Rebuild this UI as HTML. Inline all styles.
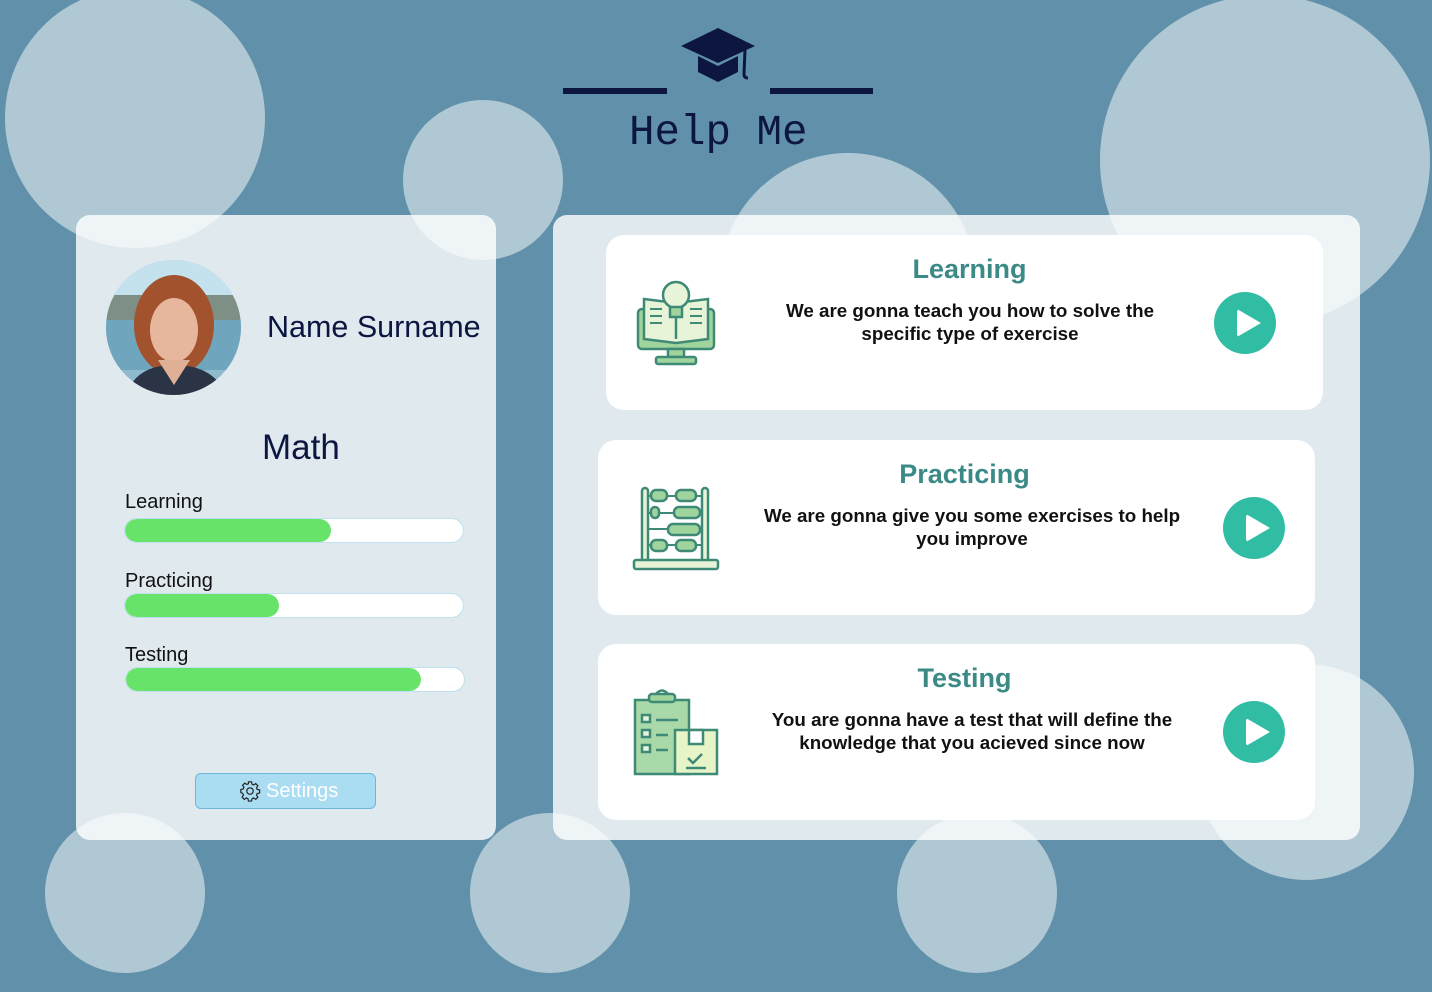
<!DOCTYPE html>
<html><head><meta charset="utf-8"><style>
*{margin:0;padding:0;box-sizing:border-box}
body{width:1432px;height:992px;background:#6191aa;position:relative;overflow:hidden;font-family:"Liberation Sans",Arial,sans-serif}
.c{position:absolute;border-radius:50%;background:#b0c8d4}
.panel{position:absolute;background:rgba(255,255,255,0.8);border-radius:14px}
.card{position:absolute;background:#fff;border-radius:18px}
.card h2{position:absolute;left:0;right:0;text-align:center;color:#3b8a86;font-size:27px;font-weight:bold}
.card p{position:absolute;text-align:center;font-weight:bold;font-size:18.8px;line-height:23px;color:#111}
.play{position:absolute;width:62px;height:62px;border-radius:50%;background:#31bda4}
.play:after{content:"";position:absolute;left:23px;top:17px;border-left:24px solid #fff;border-top:14px solid transparent;border-bottom:14px solid transparent;border-radius:3px}
.lbl{position:absolute;left:125px;font-size:20px;color:#111}
.bar{position:absolute;left:124px;width:340px;height:25px;border-radius:13px;background:#fff;border:1px solid #bfe0ef;overflow:hidden}
.bar div{height:100%;background:#68e36a;border-radius:13px}
</style></head><body>
<div class="c" style="left:5px;top:-12px;width:260px;height:260px"></div>
<div class="c" style="left:403px;top:100px;width:160px;height:160px"></div>
<div class="c" style="left:720px;top:153px;width:256px;height:256px"></div>
<div class="c" style="left:1100px;top:-5px;width:330px;height:330px"></div>
<div class="c" style="left:1198px;top:664px;width:216px;height:216px"></div>
<div class="c" style="left:45px;top:813px;width:160px;height:160px"></div>
<div class="c" style="left:470px;top:813px;width:160px;height:160px"></div>
<div class="c" style="left:897px;top:813px;width:160px;height:160px"></div>

<div style="position:absolute;left:563px;top:88px;width:104px;height:6px;background:#0c1640"></div>
<div style="position:absolute;left:770px;top:88px;width:103px;height:6px;background:#0c1640"></div>
<svg style="position:absolute;left:678px;top:26px" width="80" height="60" viewBox="0 0 80 60">
<polygon points="40,2 77,20 40,37 3,20" fill="#0c1640"/>
<path d="M20,30 L20,46 L40,56 L60,46 L60,30 L40,40 Z" fill="#0c1640"/>
<path d="M67,24 L66,48 Q66,52 70,52" stroke="#0c1640" stroke-width="3" fill="none"/>
</svg>
<div style="position:absolute;left:629px;top:109px;font-family:'Liberation Mono',monospace;font-size:42.5px;color:#0c1640">Help Me</div>

<div class="panel" style="left:76px;top:215px;width:420px;height:625px"></div>
<svg style="position:absolute;left:106px;top:260px" width="135" height="135" viewBox="0 0 135 135">
<defs><clipPath id="cp"><circle cx="67.5" cy="67.5" r="67.5"/></clipPath></defs>
<g clip-path="url(#cp)">
<rect width="135" height="135" fill="#8fb9cc"/>
<rect y="0" width="135" height="40" fill="#c4e2ee"/>
<rect y="35" width="135" height="25" fill="#7e8f86"/>
<rect y="60" width="135" height="50" fill="#6fa5bd"/>
<ellipse cx="68" cy="65" rx="40" ry="50" fill="#a2522c"/>
<ellipse cx="68" cy="70" rx="24" ry="32" fill="#e6b79d"/>
<path d="M20,135 Q30,105 68,105 Q108,105 120,135 Z" fill="#2a3445"/>
<path d="M52,100 L68,125 L84,100 Z" fill="#e0b096"/>
</g></svg>
<div style="position:absolute;left:267px;top:310px;font-size:30.5px;color:#0c1640">Name Surname</div>
<div style="position:absolute;left:262px;top:428px;font-size:35px;color:#0c1640">Math</div>
<div class="lbl" style="top:491px">Learning</div>
<div class="bar" style="top:518px"><div style="width:206px"></div></div>
<div class="lbl" style="top:570px">Practicing</div>
<div class="bar" style="top:593px"><div style="width:154px"></div></div>
<div class="lbl" style="top:644px">Testing</div>
<div class="bar" style="top:667px;left:125px"><div style="width:295px"></div></div>
<div style="position:absolute;left:195px;top:773px;width:181px;height:36px;border-radius:6px;background:#aadcf2;border:1px solid #6fb6d8;color:#fff;font-size:20px;line-height:34px;padding-left:70px">Settings</div>
<svg style="position:absolute;left:239px;top:780px" width="22" height="22" viewBox="0 0 24 24" fill="none" stroke="#222" stroke-width="1.3">
<circle cx="12" cy="12" r="3.5"/>
<path d="M10.3 2h3.4l.5 2.6 1.8.8 2.2-1.5 2.4 2.4-1.5 2.2.8 1.8 2.6.5v3.4l-2.6.5-.8 1.8 1.5 2.2-2.4 2.4-2.2-1.5-1.8.8-.5 2.6h-3.4l-.5-2.6-1.8-.8-2.200 1.5-2.4-2.4 1.5-2.2-.8-1.8L2 13.7v-3.4l2.6-.5.8-1.8-1.5-2.2 2.4-2.4 2.2 1.5 1.8-.8z"/>
</svg>

<div class="panel" style="left:553px;top:215px;width:807px;height:625px"></div>

<div class="card" style="left:606px;top:235px;width:717px;height:175px">
<h2 style="top:19px;left:0;right:0;padding-left:10px">Learning</h2>
<p style="left:160px;width:408px;top:64px">We are gonna teach you how to solve the specific type of exercise</p>
<div class="play" style="left:608px;top:57px"></div>
<svg style="position:absolute;left:30px;top:44px" width="82" height="88" viewBox="0 0 82 88" stroke="#3e8a76" stroke-width="2.5" fill="#cfe9b8">
<rect x="2" y="30" width="76" height="40" rx="4" fill="#9fd49d"/>
<rect x="32" y="70" width="16" height="8" fill="#9fd49d"/>
<rect x="20" y="78" width="40" height="7" rx="2" fill="#9fd49d"/>
<path d="M8,20 L40,24 L72,20 L72,60 L40,64 L8,60 Z" fill="#e8f4d8"/>
<path d="M14,30h12M14,37h12M14,44h12M54,30h12M54,37h12M54,44h12" stroke-width="2"/>
<circle cx="40" cy="16" r="13" fill="#e8f4d8"/>
<rect x="34" y="28" width="12" height="10" fill="#9fd49d"/>
<path d="M40,38 L40,60"/>
</svg>
</div>

<div class="card" style="left:598px;top:440px;width:717px;height:175px">
<h2 style="top:19px;padding-left:16px">Practicing</h2>
<p style="left:160px;width:428px;top:64px">We are gonna give you some exercises to help you improve</p>
<div class="play" style="left:625px;top:57px"></div>
<svg style="position:absolute;left:34px;top:44px" width="88" height="88" viewBox="0 0 88 88" stroke="#3e8a76" stroke-width="2.5" fill="#9fd49d">
<rect x="10" y="4" width="6" height="74" rx="3" fill="#e8f4d8"/>
<rect x="70" y="4" width="6" height="74" rx="3" fill="#e8f4d8"/>
<rect x="2" y="76" width="84" height="9" rx="2" fill="#e8f4d8"/>
<path d="M16,12h54M16,29h54M16,45h54M16,61h54" stroke-width="2"/>
<rect x="19" y="6" width="16" height="11" rx="5"/><rect x="44" y="6" width="20" height="11" rx="5"/>
<rect x="19" y="23" width="8" height="11" rx="4"/><rect x="42" y="23" width="26" height="11" rx="5"/>
<rect x="36" y="40" width="32" height="11" rx="5"/>
<rect x="19" y="56" width="16" height="11" rx="5"/><rect x="44" y="56" width="20" height="11" rx="5"/>
</svg>
</div>

<div class="card" style="left:598px;top:644px;width:717px;height:176px">
<h2 style="top:19px;padding-left:16px">Testing</h2>
<p style="left:160px;width:428px;top:64px">You are gonna have a test that will define the knowledge that you acieved since now</p>
<div class="play" style="left:625px;top:57px"></div>
<svg style="position:absolute;left:34px;top:44px" width="88" height="90" viewBox="0 0 88 90" stroke="#3e8a76" stroke-width="2.5" fill="#9fd49d">
<rect x="3" y="12" width="54" height="74" fill="#a9d9a9"/>
<rect x="17" y="6" width="26" height="8" rx="3"/>
<path d="M24,6 Q30,-1 36,6" fill="none"/>
<rect x="10" y="27" width="8" height="7" fill="#e8f4d8"/><path d="M24,32h22"/>
<rect x="10" y="42" width="8" height="7" fill="#e8f4d8"/><path d="M24,47h12"/>
<rect x="10" y="57" width="8" height="7" fill="#e8f4d8"/><path d="M24,62h12"/>
<rect x="43" y="42" width="42" height="44" fill="#e6f4c8"/>
<rect x="57" y="42" width="14" height="14" fill="#fff"/>
<path d="M56,70 l5,5 l9,-9 M54,80h20" fill="none"/>
</svg>
</div>
</body></html>
